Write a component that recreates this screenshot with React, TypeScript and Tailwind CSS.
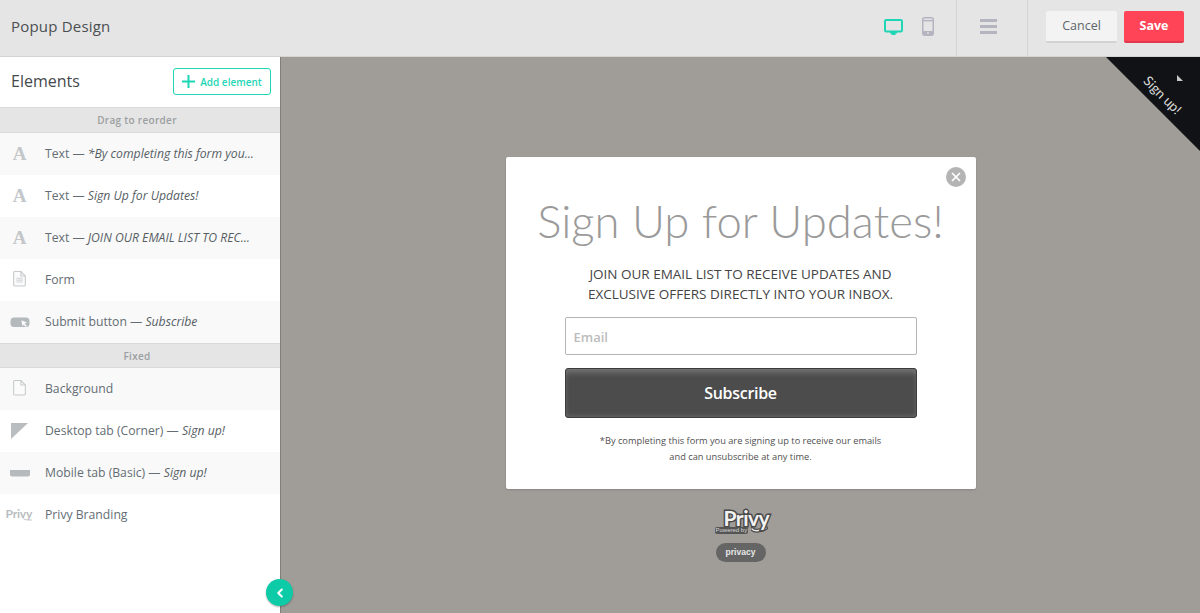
import React from 'react';
import { ChevronLeft, X } from 'lucide-react';

const teal = '#1fd6b4';

const TextIcon = () => (
  <span className="block w-5 -translate-y-[1px] text-center font-['Liberation_Serif',serif] font-bold text-[19px] leading-none text-[#c3c7c9]">A</span>
);

const PageIcon = ({ lines }: { lines?: boolean }) => (
  <svg width="13" height="15.5" viewBox="0 0 14 17" fill="none" stroke="#c6cacc" strokeWidth="1.2" className="-translate-y-[1px]">
    <path d="M1.6.6h7l4.8 4.8v10a1 1 0 0 1-1 1H1.6a1 1 0 0 1-1-1V1.6a1 1 0 0 1 1-1z" fill="#fbfbfb" />
    <path d="M8.6.6v4.8h4.8" />
    {lines && <path d="M3.5 8h7M3.5 10h7M3.5 12h7" stroke="#d2d5d7" />}
  </svg>
);

const ButtonIcon = () => (
  <svg width="20" height="11" viewBox="0 0 20 11">
    <rect x="0.5" y="0.5" width="19" height="9.5" rx="3.5" fill="#b4b9bc" />
    <path d="M11 3l6.5 2.6-2.6 1 2.2 2.4-1.3 1.2-2.2-2.4-1 2.4z" fill="#fff" stroke="#b4b9bc" strokeWidth="0.5" />
  </svg>
);

const CornerIcon = () => (
  <svg width="17" height="16" viewBox="0 0 17 16">
    <path d="M0 0h17L0 16z" fill="#b9bdbf" />
  </svg>
);

const BarIcon = () => (
  <svg width="20" height="7" viewBox="0 0 20 7">
    <path d="M0 0h20v4.5a2 2 0 0 1-2 2H2a2 2 0 0 1-2-2z" fill="#b6babd" />
  </svg>
);

const PrivySmall = () => (
  <span className="relative block w-[26px] -ml-[2px] -translate-y-[1px]">
    <span className="block font-['Lato',sans-serif] font-bold text-[12px] leading-none tracking-[-0.2px] text-[#b9bdc0]">Privy</span>
    <svg className="absolute left-[17px] top-[9px]" width="9" height="4" viewBox="0 0 9 4" fill="none">
      <path d="M0 1c1 2 4 2 9 2" stroke="#c2c6c8" strokeWidth="1" />
    </svg>
  </span>
);

const rows = [
  { icon: <TextIcon />, label: 'Text — ', em: '*By completing this form you...', alt: true },
  { icon: <TextIcon />, label: 'Text — ', em: 'Sign Up for Updates!', alt: false },
  { icon: <TextIcon />, label: 'Text — ', em: 'JOIN OUR EMAIL LIST TO REC...', alt: true },
  { icon: <PageIcon lines />, label: 'Form', alt: false },
  { icon: <ButtonIcon />, label: 'Submit button — ', em: 'Subscribe', alt: true },
];

const fixedRows = [
  { icon: <PageIcon />, label: 'Background', alt: true },
  { icon: <CornerIcon />, label: 'Desktop tab (Corner) — ', em: 'Sign up!', alt: false },
  { icon: <BarIcon />, label: 'Mobile tab (Basic) — ', em: 'Sign up!', alt: true },
  { icon: <PrivySmall />, label: 'Privy Branding', alt: false },
];

type RowData = { icon: React.ReactNode; label: string; em?: string; alt: boolean };

const Row = ({ row }: { row: RowData }) => (
  <div className={`flex h-[42px] items-center ${row.alt ? 'bg-[#f9f9f9]' : 'bg-white'}`}>
    <div className="flex w-[45px] shrink-0 justify-center pr-[6px]">{row.icon}</div>
    <p className="text-[12.2px] text-[#646d73] whitespace-nowrap">
      {row.label}
      {row.em && <em className="text-[#565e64]">{row.em}</em>}
    </p>
  </div>
);

const SectionLabel = ({ children, h }: { children: string; h: string }) => (
  <div className={`flex ${h} items-center justify-center bg-[#e5e5e5] border-y border-[#d9d9d9] pt-[1px] pr-[6px] text-[10px] font-semibold tracking-[0.3px] text-[#9b9fa2]`}>
    {children}
  </div>
);

const Header = () => (
  <header className="flex h-[57px] shrink-0 items-center bg-[#e5e5e5] border-b border-[#d4d3d1]">
    <h1 className="pl-[11px] pb-[3px] text-[15px] text-[#4b4f52] tracking-[0.2px]">Popup Design</h1>
    <div className="ml-auto flex items-center gap-[19px] pb-[3px] pr-[22px]">
      <svg width="19" height="16" viewBox="0 0 19 16">
        <rect x="1" y="1" width="17" height="11.5" rx="1.2" fill="#e5e5e5" stroke={teal} strokeWidth="2" />
        <path d="M6 13h7v1.5h-1.5V16h-4v-1.5H6z" fill={teal} />
      </svg>
      <svg width="12" height="19" viewBox="0 0 12 19">
        <rect x="0.75" y="0.75" width="10.5" height="17.5" rx="2" fill="#e5e5e5" stroke="#b4b4c0" strokeWidth="1.5" />
        <rect x="0.75" y="3" width="10.5" height="1.4" fill="#b4b4c0" />
        <rect x="0.75" y="14" width="10.5" height="4" rx="1.5" fill="#b4b4c0" />
        <circle cx="6" cy="16" r="0.9" fill="#e5e5e5" />
      </svg>
    </div>
    <div className="flex h-full w-[72px] items-center justify-center border-x border-[#d4d4d4] pb-[3px] pr-[7px]">
      <div className="flex w-[17px] flex-col gap-[3px]">
        <span className="h-[3px] bg-[#b5b5c0]" />
        <span className="h-[3px] bg-[#b5b5c0]" />
        <span className="h-[3px] bg-[#b5b5c0]" />
      </div>
    </div>
    <div className="flex w-[172px] items-center gap-[7px] pb-[3px] pl-[18px]">
      <button className="h-[32px] w-[71px] rounded-[2px] bg-[#f3f3f3] border-b-2 border-[#d2d2d2] pt-[1px] text-[12.5px] text-[#5e666c]">Cancel</button>
      <button className="h-[32px] w-[60px] rounded-[2px] bg-[#ff4457] border-b-2 border-[#e0394b] pt-[1px] text-[12.5px] font-bold text-white">Save</button>
    </div>
  </header>
);

const Sidebar = () => (
  <aside className="relative z-10 w-[281px] shrink-0 bg-white border-r border-[#817d79]">
    <div className="flex h-[50px] items-center justify-between pb-[2px] pl-[11px] pr-[9px]">
      <h2 className="text-[16px] text-[#46494c]">Elements</h2>
      <button className="flex h-[27px] w-[98px] items-center justify-center gap-[5px] rounded-[3px] border border-[#1fd6b4] text-[10px] font-semibold text-[#1fd6b4]">
        <svg width="13" height="13" viewBox="0 0 13 13">
          <path d="M5.5 0h2v5.5H13v2H7.5V13h-2V7.5H0v-2h5.5z" fill="#1fd6b4" />
        </svg>
        <span className="pt-[2px]">Add element</span>
      </button>
    </div>
    <SectionLabel h="h-[26px]">Drag to reorder</SectionLabel>
    {rows.map((r) => <Row key={r.label + r.em} row={r} />)}
    <SectionLabel h="h-[25px]">Fixed</SectionLabel>
    {fixedRows.map((r) => <Row key={r.label} row={r} />)}
    <button className="absolute left-[266px] top-[522px] flex h-[27px] w-[27px] items-center justify-center rounded-full bg-[#0ecba8] text-white shadow-[0_1px_2px_rgba(0,0,0,0.3)]">
      <ChevronLeft size={14} strokeWidth={3.5} />
    </button>
  </aside>
);

const Popup = () => (
  <div className="relative flex h-[332px] w-[470px] flex-col items-center rounded-[2px] bg-white shadow-[0_1px_2px_rgba(0,0,0,0.15)]">
    <button className="absolute right-[10px] top-[10px] flex h-[20px] w-[20px] items-center justify-center rounded-full bg-[#b4b4b4] text-white">
      <X size={14} strokeWidth={3} />
    </button>
    <h2 className="mt-[34px] font-['Lato',sans-serif] font-light text-[45.5px] leading-[60px] text-[#9a9a9a] whitespace-nowrap">Sign Up for Updates!</h2>
    <p className="mt-[13px] text-center text-[13.5px] leading-[20px] text-[#444444]">
      JOIN OUR EMAIL LIST TO RECEIVE UPDATES AND<br />EXCLUSIVE OFFERS DIRECTLY INTO YOUR INBOX.
    </p>
    <div className="mt-[13px] flex h-[38px] w-[352px] items-center rounded-[2px] border border-[#b4b4b4] pl-[8px] pt-[3px] text-[13px] font-semibold text-[#bcbcbc]">Email</div>
    <button className="mt-[13px] flex h-[50px] w-[352px] items-center justify-center rounded-[3px] border border-[#3c3c3c] bg-[#4c4c4c] shadow-[inset_0_5px_6px_-2px_rgba(255,255,255,0.25),inset_0_-3px_4px_-2px_rgba(255,255,255,0.15)] text-[16px] font-semibold tracking-[-0.3px] text-white">Subscribe</button>
    <p className="mt-[15px] text-center text-[9.25px] leading-[16px] text-[#505050]">
      *By completing this form you are signing up to receive our emails<br />and can unsubscribe at any time.
    </p>
  </div>
);

const Branding = () => (
  <div className="mt-[21px] flex flex-col items-center">
    <div className="relative h-[24px] w-[52px]">
      <svg className="absolute left-[36px] top-[13px]" width="17" height="10" viewBox="0 0 17 10" fill="none">
        <path d="M1 6c3 3 8 2 14-1" stroke="#4a4a4a" strokeWidth="4" strokeLinecap="round" />
        <path d="M1 6c3 3 8 2 14-1" stroke="#e8e8e8" strokeWidth="1.5" strokeLinecap="round" />
      </svg>
      <span className="absolute left-[9px] top-0 font-['Lato',sans-serif] font-bold text-[21px] leading-[16px] tracking-[-0.5px] text-[#f2f2f2] [-webkit-text-stroke:3px_#4a4a4a] [paint-order:stroke_fill]">Privy</span>
      <span className="absolute left-0 top-[17px] rounded-[2px] bg-[#555555] px-[1px] font-['Liberation_Sans',sans-serif] text-[6px] leading-[7px] text-[#d8d8d8] whitespace-nowrap">Powered by</span>
    </div>
    <span className="mt-[9px] flex h-[19px] w-[50px] items-center justify-center rounded-full bg-[#656565] font-['Liberation_Sans',sans-serif] text-[8.5px] font-bold text-[#e8e8e8]">privacy</span>
  </div>
);

const CornerTab = () => (
  <>
    <svg className="absolute right-0 top-0" width="94" height="94" viewBox="0 0 94 94">
      <path d="M0 0h94v94z" fill="#111215" />
      <path d="M71 18l6 6h-6z" fill="#c8c8c8" />
    </svg>
    <span className="absolute right-[14px] top-[28px] rotate-45 font-['Lato',sans-serif] text-[13.5px] text-[#dcdcdc]">Sign up!</span>
  </>
);

export default function App() {
  return (
    <div className="flex h-[613px] w-[1200px] flex-col overflow-hidden font-['Open_Sans',sans-serif]">
      <Header />
      <div className="flex min-h-0 flex-1">
        <Sidebar />
        <main className="relative flex flex-1 flex-col items-center overflow-hidden bg-[#a09c98] pt-[100px]">
          <CornerTab />
          <Popup />
          <Branding />
        </main>
      </div>
    </div>
  );
}
